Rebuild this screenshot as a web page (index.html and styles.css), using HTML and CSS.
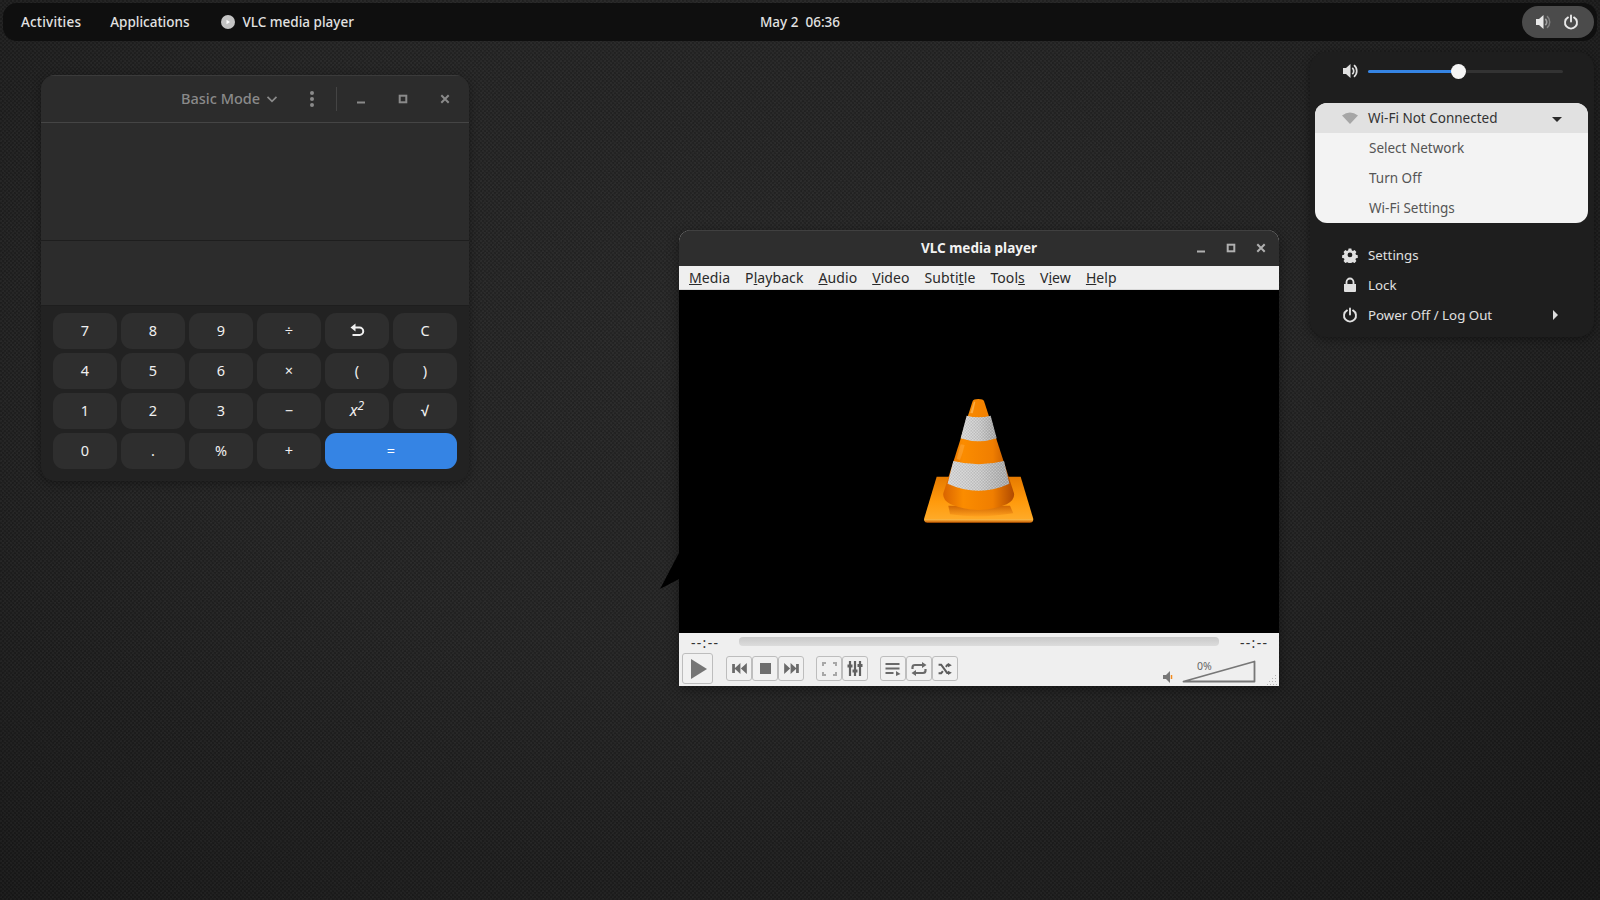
FILE: index.html
```html
<!DOCTYPE html>
<html lang="en">
<head>
  <meta charset="UTF-8">
  <title>Desktop</title>
  <link rel="stylesheet" href="styles.css">
</head>
<body>
  <svg class="noise" width="1600" height="900">
    <filter id="grain"><feTurbulence type="fractalNoise" baseFrequency="0.8" numOctaves="2" seed="4"/><feColorMatrix values="0 0 0 0 0  0 0 0 0 0  0 0 0 0 0  0.9 0 0 0 -0.25"/></filter>
    <rect width="1600" height="900" filter="url(#grain)"/>
  </svg>

  <svg class="defs" width="0" height="0">
    <symbol id="speaker" viewBox="0 0 16 16">
      <path d="M1 5h3l4.500-4v14L4 11H1z" fill="currentColor"/>
      <path d="M10.300 4.800a4.300 4.300 0 0 1 0 6.400" fill="none" stroke="currentColor" stroke-width="1.700"/>
      <path d="M12 2.200a7.500 7.500 0 0 1 0 11.600" fill="none" stroke="currentColor" stroke-width="1.700"/>
    </symbol>
    <symbol id="speaker-dim" viewBox="0 0 16 16">
      <path d="M1 5h3l4.500-4v14L4 11H1z" fill="currentColor"/>
      <path d="M10.300 4.800a4.300 4.300 0 0 1 0 6.400" fill="none" stroke="currentColor" stroke-width="1.700" opacity=".55"/>
      <path d="M12 2.200a7.500 7.500 0 0 1 0 11.600" fill="none" stroke="currentColor" stroke-width="1.500" opacity=".35"/>
    </symbol>
    <symbol id="power" viewBox="0 0 16 16">
      <path d="M5 3.400a6 6 0 1 0 6 0" fill="none" stroke="currentColor" stroke-width="1.900" stroke-linecap="round"/>
      <path d="M8 1.500v6" stroke="currentColor" stroke-width="1.900" stroke-linecap="round"/>
    </symbol>
    <symbol id="win-min" viewBox="0 0 10 10"><path d="M1 8.500h8" stroke="currentColor" stroke-width="1.800"/></symbol>
    <symbol id="win-max" viewBox="0 0 10 10"><rect x="1.700" y="1.700" width="6.600" height="6.600" fill="none" stroke="currentColor" stroke-width="2"/></symbol>
    <symbol id="win-close" viewBox="0 0 10 10"><path d="M1.300 1.300l7.400 7.400M8.700 1.300l-7.400 7.400" stroke="currentColor" stroke-width="2"/></symbol>
  </svg>

  <header class="topbar">
    <nav class="topbar-left">
      <span class="activities">Activities</span>
      <span class="applications">Applications</span>
      <span class="appname">
        <svg class="appicon" width="14" height="14" viewBox="0 0 14 14"><circle cx="7" cy="7" r="7" fill="#c4c4c4"/><path d="M5.500 4.800L9 7l-3.500 2.200z" fill="#fff"/></svg>
        VLC media player
      </span>
    </nav>
    <div class="clock">May 2&nbsp;&nbsp;06:36</div>
    <div class="topbar-right">
      <div class="status-pill">
        <svg class="pill-icon" width="16" height="16"><use href="#speaker-dim"/></svg>
        <svg class="pill-icon" width="16" height="16"><use href="#power"/></svg>
      </div>
    </div>
  </header>

  <!-- calculator window -->
  <section class="window calc">
    <div class="calc-head">
      <span class="mode">Basic Mode</span>
      <svg class="chevron" width="12" height="12" viewBox="0 0 12 12"><path d="M1.500 3.800L6 8.300l4.500-4.500" fill="none" stroke="currentColor" stroke-width="1.700"/></svg>
      <svg class="kebab" width="4" height="16" viewBox="0 0 4 16"><circle cx="2" cy="2" r="2"/><circle cx="2" cy="8" r="2"/><circle cx="2" cy="14" r="2"/></svg>
      <span class="head-sep"></span>
      <svg class="cw cw-min" width="10" height="10"><use href="#win-min"/></svg>
      <svg class="cw cw-max" width="10" height="10"><use href="#win-max"/></svg>
      <svg class="cw cw-close" width="10" height="10"><use href="#win-close"/></svg>
    </div>
    <div class="calc-display"></div>
    <div class="calc-input"></div>
    <div class="keypad">
      <button>7</button><button>8</button><button>9</button><button>÷</button>
      <button><svg width="16" height="14" viewBox="0 0 16 14"><path d="M6.500 0.500L1.500 4.500l5 4z" fill="currentColor"/><path d="M5 4.500h5.500a3.700 3.700 0 0 1 0 7.500H3.500" fill="none" stroke="currentColor" stroke-width="2"/></svg></button><button>C</button>
      <button>4</button><button>5</button><button>6</button><button>×</button><button>(</button><button>)</button>
      <button>1</button><button>2</button><button>3</button><button>−</button><button class="square"><i>x</i><sup><i>2</i></sup></button><button class="root">√</button>
      <button>0</button><button>.</button><button>%</button><button>+</button><button class="equals">=</button>
    </div>
  </section>

  <div class="pointer"></div>

  <!-- vlc window -->
  <section class="window vlc">
    <div class="vlc-title">
      <span class="vlc-name">VLC media player</span>
      <div class="vlc-btns">
        <svg width="10" height="10"><use href="#win-min"/></svg>
        <svg width="10" height="10"><use href="#win-max"/></svg>
        <svg width="10" height="10"><use href="#win-close"/></svg>
      </div>
    </div>
    <div class="vlc-menu">
      <span><u>M</u>edia</span><span>P<u>l</u>ayback</span><span><u>A</u>udio</span><span><u>V</u>ideo</span><span>Subti<u>t</u>le</span><span>Tool<u>s</u></span><span>V<u>i</u>ew</span><span><u>H</u>elp</span>
    </div>
    <div class="vlc-video">
      <svg class="cone" width="160" height="150" viewBox="0 0 480 450">
        <defs>
          <linearGradient id="base" x1="0" y1="0" x2="0" y2="1"><stop offset="0" stop-color="#e67a00"/><stop offset="0.55" stop-color="#ff9a0c"/><stop offset="1" stop-color="#ffad2c"/></linearGradient>
          <linearGradient id="body" x1="0" y1="0" x2="1" y2="0"><stop offset="0" stop-color="#d96400"/><stop offset="0.28" stop-color="#fb8c00"/><stop offset="0.7" stop-color="#f07e00"/><stop offset="1" stop-color="#b04a00"/></linearGradient>
          <linearGradient id="band" x1="0" y1="0" x2="1" y2="0"><stop offset="0" stop-color="#d2d2d2"/><stop offset="0.5" stop-color="#c4c4c4"/><stop offset="1" stop-color="#a0a0a0"/></linearGradient>
          <pattern id="mesh" width="9" height="9" patternUnits="userSpaceOnUse"><circle cx="2.250" cy="2.250" r="1.700" fill="#fff" opacity=".5"/><circle cx="6.750" cy="6.750" r="1.700" fill="#fff" opacity=".5"/><circle cx="6.750" cy="2.250" r="1.300" fill="#666" opacity=".3"/><circle cx="2.250" cy="6.750" r="1.300" fill="#666" opacity=".3"/></pattern>
          <linearGradient id="lip" x1="0" y1="0" x2="0" y2="1"><stop offset="0" stop-color="#ffc04a"/><stop offset="1" stop-color="#c85c00"/></linearGradient>
          <linearGradient id="foot" x1="0" y1="0" x2="0" y2="1"><stop offset="0" stop-color="#c85c00"/><stop offset="1" stop-color="#ff9f1c"/></linearGradient>
        </defs>
        <path d="M110 275H362L400 402Q400 411 392 411H80Q72 411 72 402Z" fill="url(#base)"/>
        <path d="M74 402H398V407Q398 413 390 413H82Q74 413 74 407Z" fill="url(#lip)"/>
        <path d="M145 362H330L340 385Q236 402 150 388Z" fill="url(#foot)" opacity=".85"/>
        <path d="M218 48Q220 42 235 42Q250 42 252 48L342 325Q345 345 320 358Q236 392 152 358Q127 345 130 325Z" fill="url(#body)"/>
        <path d="M200 92Q236 102 272 92L290 160Q236 178 182 160Z" fill="url(#band)"/>
        <path d="M200 92Q236 102 272 92L290 160Q236 178 182 160Z" fill="url(#mesh)"/>
        <path d="M160 228Q236 248 312 228L328 296Q236 338 143 296Z" fill="url(#band)"/>
        <path d="M160 228Q236 248 312 228L328 296Q236 338 143 296Z" fill="url(#mesh)"/>
        <path d="M226 50Q222 70 218 85L211 84L222 50Z" fill="#ffbc5c" opacity=".7"/>
        <path d="M194 180Q188 205 180 225L170 222L182 178Z" fill="#ffb04a" opacity=".45"/>
      </svg>
    </div>
    <div class="vlc-controls">
      <div class="seek-row">
        <span class="time">--:--</span>
        <div class="seek"></div>
        <span class="time">--:--</span>
      </div>
      <div class="button-row">
        <span class="ctl play"><svg width="16" height="20" viewBox="0 0 16 20"><path d="M0 0l16 10L0 20z" fill="#757575"/></svg></span>
        <div class="ctl-group first">
          <span class="ctl"><svg width="15" height="11" viewBox="0 0 16 12"><path d="M0 1h3v10H0zM9 0v12L2.500 6zM16 0v12L9.500 6z" fill="#6a6a6a"/></svg></span>
          <span class="ctl"><svg width="11" height="11" viewBox="0 0 11 11"><rect width="11" height="11" fill="#6e6e6e"/></svg></span>
          <span class="ctl"><svg width="15" height="11" viewBox="0 0 16 12"><path d="M16 1h-3v10h3zM7 0v12l6.500-6zM0 0v12l6.500-6z" fill="#6a6a6a"/></svg></span>
        </div>
        <div class="ctl-group">
          <span class="ctl"><svg width="15" height="14" viewBox="0 0 15 14"><path d="M1 4V1h3M11 1h3v3M14 10v3h-3M4 13H1v-3" fill="none" stroke="#a8a8a8" stroke-width="2"/></svg></span>
          <span class="ctl"><svg width="16" height="15" viewBox="0 0 16 15"><path d="M3 0v15M8 0v15M13 0v15" stroke="#606060" stroke-width="2.200"/><path d="M0.500 3.500h5v3h-5zM5.500 8.500h5v3h-5zM10.500 3h5v3h-5z" fill="#606060"/></svg></span>
        </div>
        <div class="ctl-group">
          <span class="ctl"><svg width="16" height="14" viewBox="0 0 16 14"><path d="M0.500 2h14M0.500 6.500h14M0.500 11h8" stroke="#6a6a6a" stroke-width="2.200"/><path d="M11 9l4.500 3L11 14z" fill="#6a6a6a"/></svg></span>
          <span class="ctl"><svg width="16" height="14" viewBox="0 0 16 14"><path d="M1.500 7V5.500q0-2.500 2.500-2.500h8M14.500 7v1.500q0 2.500-2.500 2.500H4" fill="none" stroke="#6a6a6a" stroke-width="2.200"/><path d="M11 0l4.500 3L11 6zM5 8l-4.500 3L5 14z" fill="#6a6a6a"/></svg></span>
          <span class="ctl"><svg width="14" height="12" viewBox="0 0 16 14"><path d="M0.500 2h3l7 9.500h2M0.500 12h3l2-2.500M9 4.500l2-2.500h2" fill="none" stroke="#5c5c5c" stroke-width="2.400"/><path d="M11.500 0L16 2.500 11.500 5zM11.500 9L16 11.500 11.500 14z" fill="#5c5c5c"/></svg></span>
        </div>
        <div class="volume">
          <svg class="vol-icon" width="11" height="12" viewBox="0 0 11 12"><path d="M0 4h3l4-4v12L3 8H0z" fill="#777"/><path d="M8.500 4v4" stroke="#f28a1c" stroke-width="1.500"/></svg>
          <div class="vol-slider">
            <span class="vol-pct">0%</span>
            <svg width="74" height="23" viewBox="0 0 74 23"><path d="M1.500 21.500L72.500 1.500V21.500Z" fill="none" stroke="#777" stroke-width="1.800" stroke-linejoin="round"/></svg>
          </div>
        </div>
        <svg class="grip" width="10" height="10" viewBox="0 0 10 10"><g fill="#b5b5b5"><rect x="8" y="0" width="1" height="1"/><rect x="5" y="3" width="1" height="1"/><rect x="8" y="3" width="1" height="1"/><rect x="2" y="6" width="1" height="1"/><rect x="5" y="6" width="1" height="1"/><rect x="8" y="6" width="1" height="1"/><rect x="0" y="9" width="1" height="1"/><rect x="3" y="9" width="1" height="1"/><rect x="6" y="9" width="1" height="1"/><rect x="9" y="9" width="1" height="1"/></g></svg>
      </div>
    </div>
  </section>

  <!-- system menu -->
  <aside class="sysmenu">
    <div class="vol-row">
      <svg class="menu-icon" width="16" height="16"><use href="#speaker"/></svg>
      <div class="slider"><div class="slider-fill"></div><div class="slider-knob"></div></div>
    </div>
    <div class="wifi-card">
      <div class="wifi-head">
        <svg class="wifi-icon" width="16" height="12" viewBox="0 0 16 12"><path d="M0 3.500Q8-2.500 16 3.500L8 12z" fill="#a6a6a6"/></svg>
        <span>Wi-Fi Not Connected</span>
        <span class="caret-down"></span>
      </div>
      <div class="wifi-item">Select Network</div>
      <div class="wifi-item">Turn Off</div>
      <div class="wifi-item">Wi-Fi Settings</div>
    </div>
    <div class="sys-list">
      <div class="sys-item">
        <svg class="menu-icon" width="16" height="16" viewBox="0 0 16 16"><path fill-rule="evenodd" fill="currentColor" d="M6.500 1h3l.4 2 1.300.6 1.800-1 2 2.100-1 1.800.5 1.300 2 .4v3l-2 .4-.5 1.300 1 1.800-2 2.100-1.800-1-1.300.5-.4 2h-3l-.4-2-1.300-.5-1.800 1-2-2.100 1-1.800-.5-1.300-2-.4v-3l2-.4.5-1.300-1-1.800 2-2.100 1.800 1 1.300-.6zM8 5.400a2.600 2.600 0 1 0 0 5.200 2.600 2.600 0 0 0 0-5.200z" transform="translate(0.600 0.600) scale(.92)"/></svg>
        <span>Settings</span>
      </div>
      <div class="sys-item">
        <svg class="menu-icon" width="16" height="16" viewBox="0 0 16 16"><path d="M4.500 7V5a3.500 3.500 0 0 1 7 0v2" fill="none" stroke="currentColor" stroke-width="1.800"/><path d="M2 7h12v7q0 1-1 1H3q-1 0-1-1z" fill="currentColor"/></svg>
        <span>Lock</span>
      </div>
      <div class="sys-item">
        <svg class="menu-icon" width="16" height="16"><use href="#power"/></svg>
        <span>Power Off / Log Out</span>
        <span class="caret-right"></span>
      </div>
    </div>
  </aside>
</body>
</html>
```

FILE: styles.css
```css
* {
  box-sizing: border-box;
}
html, body {
  margin: 0;
  height: 100%;
}
body {
  position: relative;
  width: 1600px;
  height: 900px;
  overflow: hidden;
  padding: 3px;
  font-family: "Noto Sans", sans-serif;
  font-size: 14px;
  background:
    repeating-conic-gradient(rgba(0, 0, 0, 0.13) 0 25%, rgba(255, 255, 255, 0.012) 0 50%) 0 0 / 4px 4px,
    radial-gradient(ellipse at 45% 35%, #2d2d2d 0%, #292929 45%, #1b1b1b 100%);
}
svg {
  display: block;
}
.noise {
  position: absolute;
  left: 0;
  top: 0;
  opacity: 0.3;
}
.defs {
  position: absolute;
}

/* top bar */
.topbar {
  position: relative;
  display: grid;
  grid-template-columns: 1fr auto 1fr;
  align-items: center;
  height: 38px;
  border-radius: 14px;
  background: #0f0f0f;
  color: #e2e2e2;
  font-weight: 500;
  font-size: 13.5px;
}
.topbar-left {
  display: flex;
  align-items: center;
  padding-left: 18px;
}
.activities {
  letter-spacing: 0.2px;
}
.applications {
  margin-left: 29px;
}
.appname {
  display: flex;
  align-items: center;
  gap: 7px;
  margin-left: 32px;
}
.topbar-right {
  display: flex;
  justify-content: flex-end;
  padding-right: 3px;
}
.status-pill {
  display: flex;
  align-items: center;
  justify-content: center;
  gap: 12px;
  width: 72px;
  height: 32px;
  padding-right: 2px;
  border-radius: 16px;
  background: #4b4b4b;
  color: #e8e8e8;
}

/* windows */
.window {
  position: absolute;
  overflow: hidden;
}
.calc {
  left: 41px;
  top: 75px;
  width: 428px;
  height: 406px;
  border-radius: 14px;
  background: #222;
  box-shadow: 0 2px 10px rgba(0, 0, 0, 0.35);
  color: #f0f0f0;
}
.calc-head {
  display: flex;
  align-items: center;
  height: 48px;
  padding-left: 140px;
  background: #2c2c2c;
  border-top: 1px solid #3b3b3b;
  border-bottom: 1px solid #454545;
  color: #8a8a8a;
}
.mode {
  font-size: 14.5px;
  font-weight: 500;
  width: 84px;
  margin-top: -2px;
}
.chevron {
  margin-left: 1px;
}
.kebab {
  fill: #8a8a8a;
  margin-left: 32px;
}
.head-sep {
  width: 1px;
  height: 24px;
  background: #444;
  margin-left: 22px;
}
.cw {
  color: #8a8a8a;
}
.cw-min {
  margin-left: 19px;
}
.cw-max {
  margin-left: 32px;
}
.cw-close {
  margin-left: 32px;
}
.calc-display {
  height: 118px;
  background: #2c2c2c;
  border-bottom: 1px solid #1e1e1e;
}
.calc-input {
  height: 65px;
  background: #2c2c2c;
  border-bottom: 1px solid #1e1e1e;
}
.keypad {
  display: grid;
  grid-template-columns: repeat(6, 64px);
  grid-auto-rows: 36px;
  gap: 4px;
  padding: 7px 12px;
}
.keypad button {
  display: flex;
  align-items: center;
  justify-content: center;
  border: 0;
  padding: 0 0 2px;
  border-radius: 11px;
  background: #2e2e2e;
  color: #f0f0f0;
  font-family: "Noto Sans", sans-serif;
  font-size: 14.5px;
}
.keypad .square {
  font-size: 16px;
}
.keypad sup {
  font-size: 12px;
  line-height: 1;
  margin-bottom: 8px;
}
.keypad .root {
  font-weight: 700;
}
.keypad .equals {
  grid-column: span 2;
  background: #3584e4;
  color: #fff;
}

.pointer {
  position: absolute;
  left: 660px;
  top: 553px;
  width: 19px;
  height: 36px;
  background: #000;
  clip-path: polygon(100% 0, 100% 72%, 0 100%);
}

/* vlc */
.vlc {
  left: 679px;
  top: 230px;
  width: 600px;
  height: 456px;
  border-radius: 12px 12px 0 0;
  box-shadow: 0 3px 12px rgba(0, 0, 0, 0.4);
  background: #efefef;
}
.vlc-title {
  position: relative;
  display: flex;
  align-items: center;
  justify-content: center;
  height: 36px;
  padding-bottom: 2px;
  background: #2e2e2e;
  border-top: 1px solid #404040;
  color: #f2f2f2;
}
.vlc-name {
  font-weight: 700;
  font-size: 13.5px;
}
.vlc-btns {
  position: absolute;
  right: 13px;
  top: 12px;
  display: flex;
  gap: 20px;
  color: #b0b0b0;
}
.vlc-menu {
  display: flex;
  align-items: center;
  gap: 15px;
  height: 24px;
  padding-left: 10px;
  background: #efefef;
  border-bottom: 1px solid #d8d8d8;
  color: #2a2a2a;
  font-size: 14px;
  letter-spacing: 0.08px;
}
.vlc-video {
  display: flex;
  align-items: center;
  justify-content: center;
  height: 343px;
  background: #000;
}
.cone {
  margin: -3px 0 0 2px;
}
.vlc-controls {
  height: 53px;
  background: #efefef;
  color: #333;
}
.seek-row {
  display: flex;
  align-items: center;
  height: 20px;
  padding: 0 11px 0 12px;
}
.time {
  width: 28px;
  font-size: 14px;
  letter-spacing: 1.3px;
  line-height: 1;
  white-space: nowrap;
}
.seek {
  flex: 1;
  height: 9px;
  margin: -4px 21px 0 20px;
  border-radius: 4px;
  background: linear-gradient(#c8c8c8, #dcdcdc);
}
.button-row {
  position: relative;
  display: flex;
  align-items: flex-start;
  height: 33px;
  padding-left: 3px;
}
.ctl {
  display: flex;
  align-items: center;
  justify-content: center;
  width: 26px;
  height: 25px;
  border: 1px solid #bdbdbd;
  border-radius: 3px;
  background: #f1f1f1;
}
.ctl.play {
  width: 31px;
  height: 31px;
  padding-left: 2px;
}
.ctl-group {
  display: flex;
  margin: 3px 0 0 12px;
}
.ctl-group.first {
  margin-left: 13px;
}
.volume {
  display: flex;
  align-items: flex-end;
  margin-left: auto;
  margin-right: 23px;
  height: 30px;
}
.vol-slider {
  position: relative;
  margin-left: 8px;
}
.vol-pct {
  position: absolute;
  left: 15px;
  top: -1px;
  font-size: 10.5px;
  color: #666;
}
.grip {
  position: absolute;
  right: 2px;
  bottom: 1px;
}

/* system menu */
.sysmenu {
  position: absolute;
  left: 1310px;
  top: 52px;
  width: 284px;
  height: 285px;
  border-radius: 16px;
  background: #1e1e1e;
  box-shadow: 0 2px 8px rgba(0, 0, 0, 0.4);
  color: #e0e0e0;
}
.vol-row {
  display: flex;
  align-items: center;
  height: 38px;
  padding: 0 31px 0 32px;
}
.menu-icon {
  flex: none;
}
.slider {
  position: relative;
  flex: 1;
  height: 3px;
  margin-left: 10px;
  border-radius: 2px;
  background: #333;
}
.slider-fill {
  width: 90px;
  height: 3px;
  border-radius: 2px;
  background: #3584e4;
}
.slider-knob {
  position: absolute;
  left: 83px;
  top: -6px;
  width: 15px;
  height: 15px;
  border-radius: 50%;
  background: #f5f5f5;
}
.wifi-card {
  margin: 13px 6px 0 5px;
  border-radius: 12px;
  overflow: hidden;
  background: #f3f3f3;
  color: #555;
  font-size: 13.5px;
}
.wifi-head {
  display: flex;
  align-items: center;
  height: 30px;
  padding-left: 27px;
  background: #e1e1e1;
  color: #333;
}
.wifi-icon {
  margin-right: 10px;
}
.caret-down {
  margin-left: auto;
  margin-right: 26px;
  margin-top: 3px;
  border-left: 5px solid transparent;
  border-right: 5px solid transparent;
  border-top: 5px solid #2a2a2a;
}
.wifi-item {
  display: flex;
  align-items: center;
  height: 30px;
  padding-left: 54px;
}
.sys-list {
  margin-top: 17px;
  font-size: 13.3px;
}
.sys-item {
  display: flex;
  align-items: center;
  gap: 10px;
  height: 30px;
  padding-left: 32px;
}
.caret-right {
  margin-left: auto;
  margin-right: 36px;
  border-top: 5px solid transparent;
  border-bottom: 5px solid transparent;
  border-left: 5px solid #ddd;
}
```
